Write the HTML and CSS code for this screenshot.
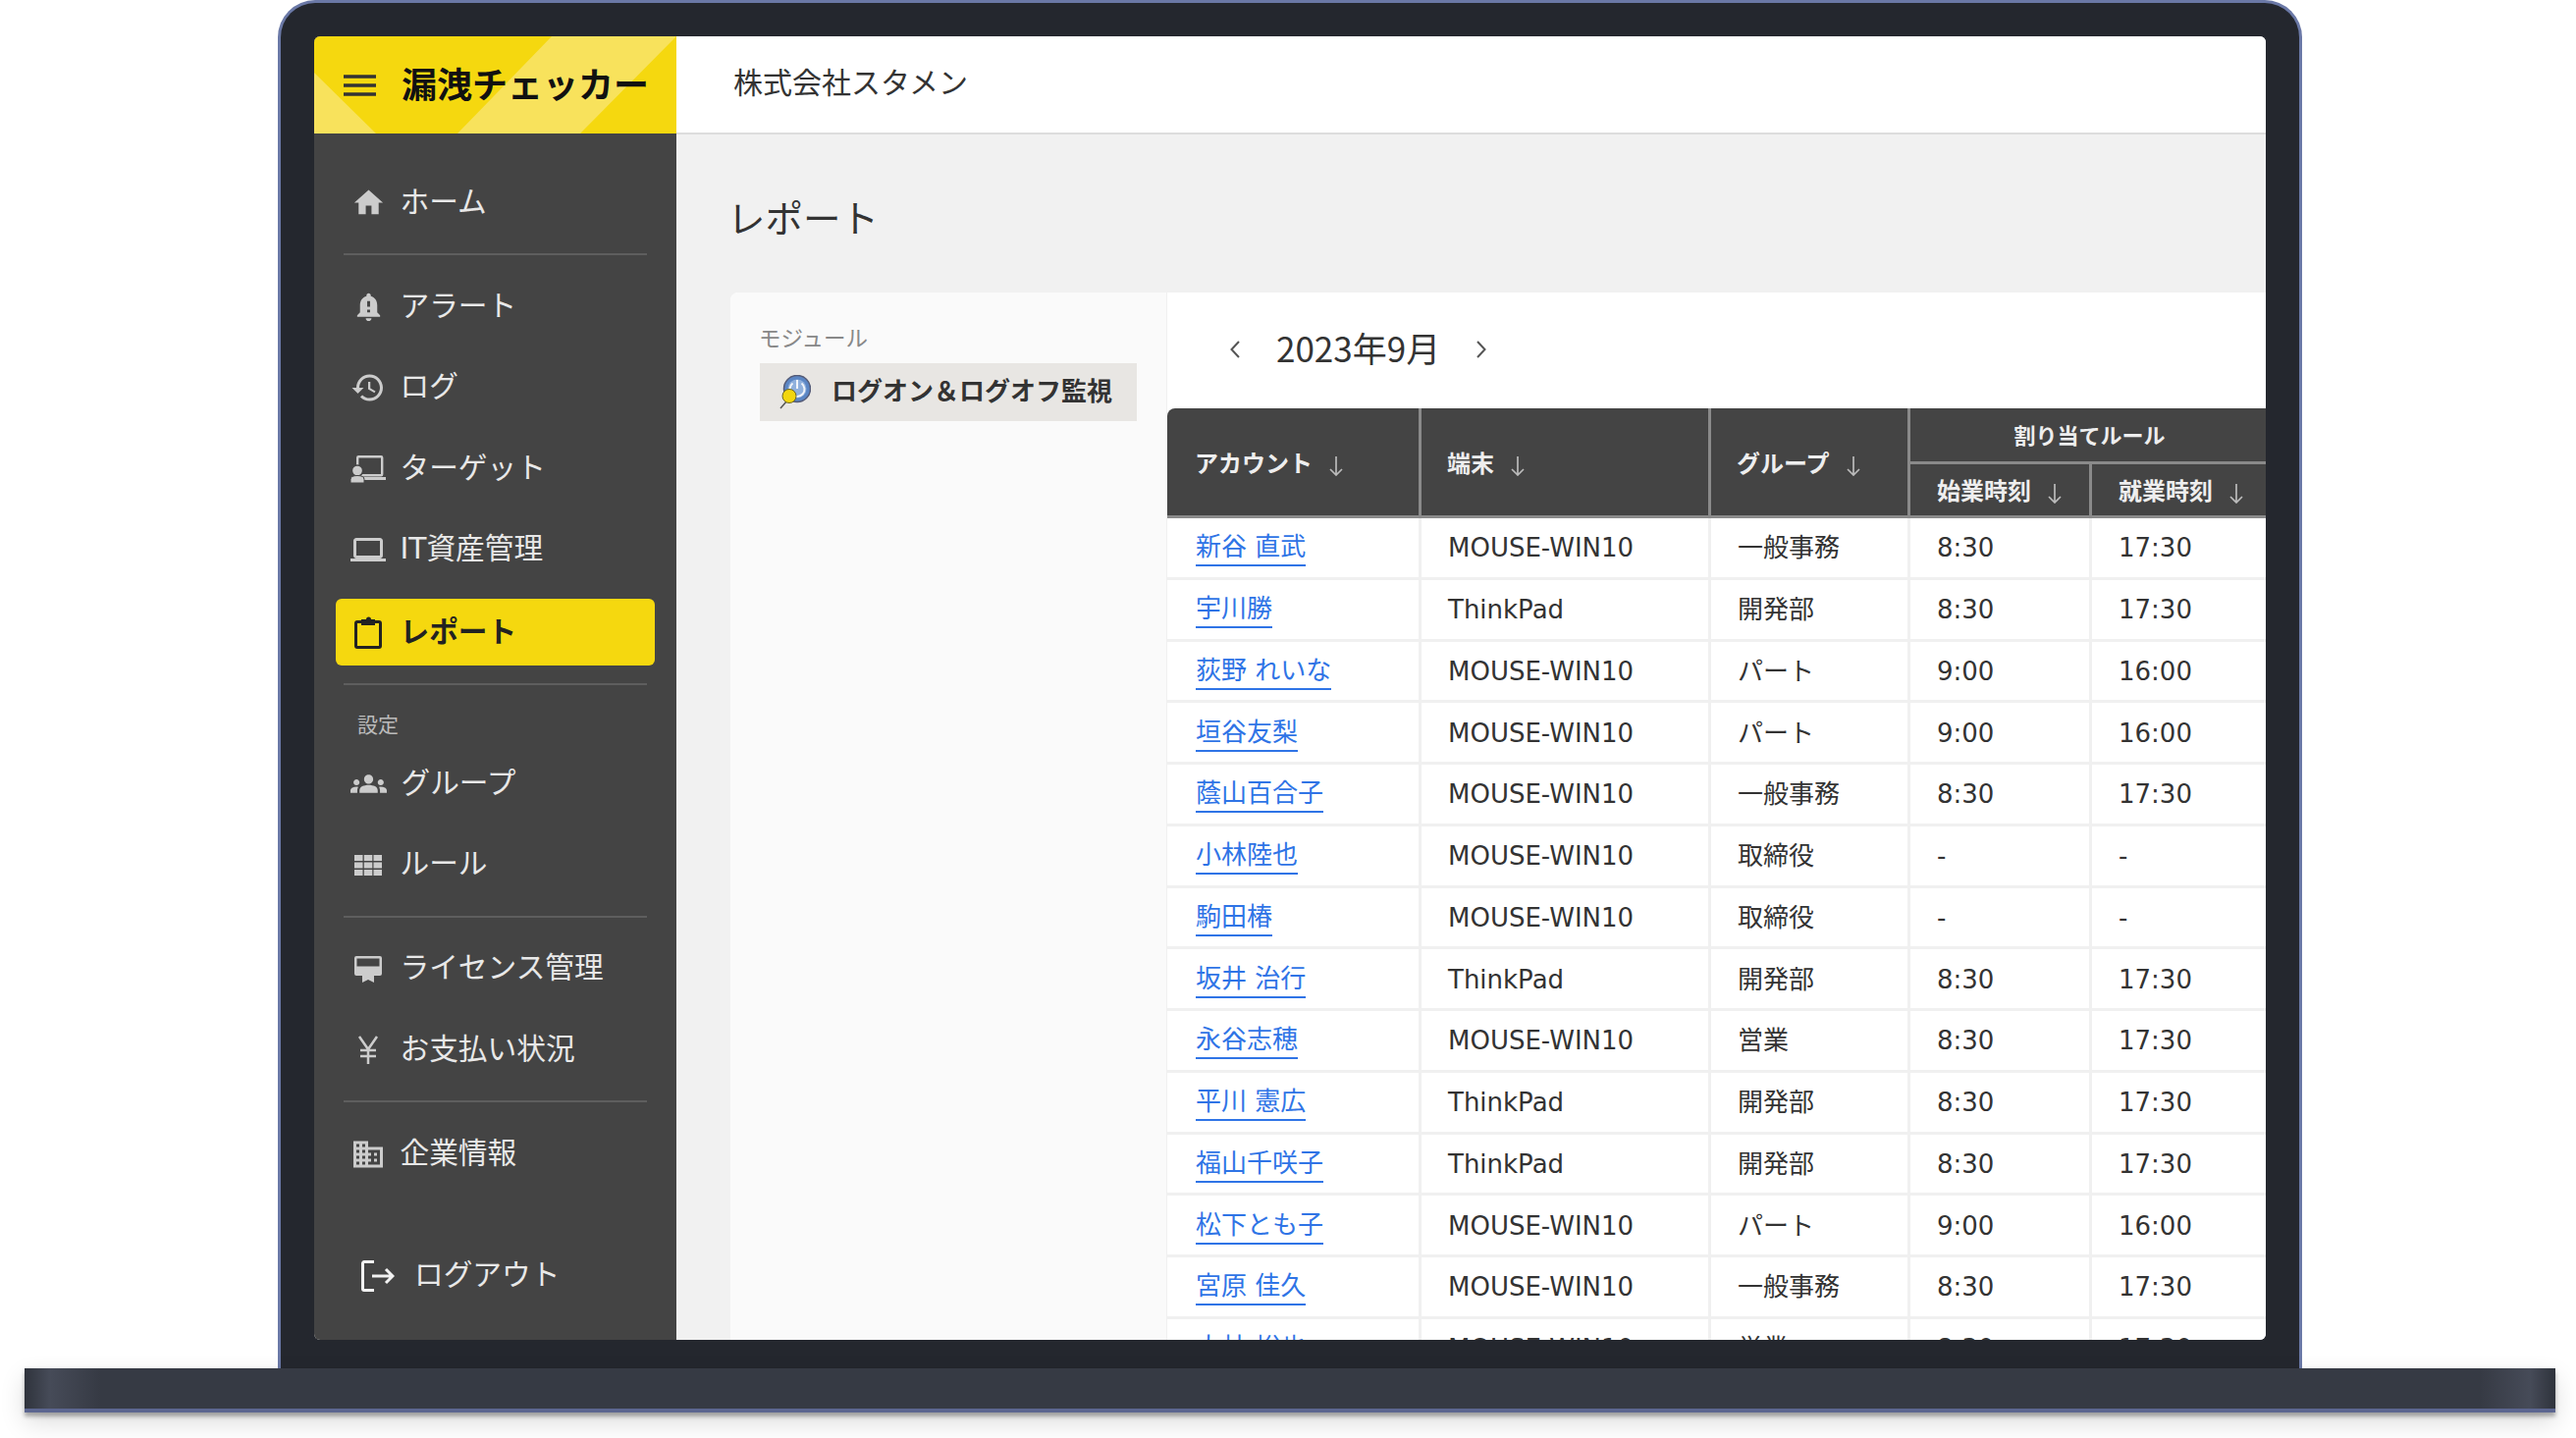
FILE: index.html
```html
<!DOCTYPE html>
<html lang="ja">
<head>
    <meta charset="UTF-8">
    <title>漏洩チェッカー | レポート</title>
    <link rel="stylesheet" href="styles.css">
</head>
<body>
    <svg class="sprite" width="0" height="0">
        <symbol id="sort" viewBox="0 0 14 20"><path d="M7 0v19M1 13l6 6 6-6" fill="none" stroke="currentColor" stroke-width="1.7"/></symbol>
    </svg>
    <div class="laptop">
        <div class="lid">
            <div class="screen">
                <aside class="sidebar">
                    <div class="logo">
                        <svg class="logo-bg" viewBox="0 0 369 99" preserveAspectRatio="none"><path d="M242 0H369L271 99H146zM0 37L63 99H0z" fill="#f8e25c"/></svg>
                        <svg class="menu-icon" width="33" height="22" viewBox="0 0 33 22"><path d="M0 2h33M0 11h33M0 20h33" stroke="#333" stroke-width="3.5"/></svg>
                        <span class="logo-text">漏洩チェッカー</span>
                    </div>
                    <nav class="side-nav">
                        <div class="nav-group">
                            <a class="nav-item"><span class="nav-icon"><svg width="35" height="35" viewBox="0 0 24 24"><path d="M10 20v-6h4v6h5v-8h3L12 3 2 12h3v8z"/></svg></span>ホーム</a>
                        </div>
                        <hr class="nav-divider">
                        <div class="nav-group">
                            <a class="nav-item"><span class="nav-icon"><svg width="35" height="35" viewBox="0 0 24 24"><path d="M18 16v-5c0-3.07-1.63-5.64-4.5-6.32V4c0-.83-.67-1.5-1.5-1.5s-1.5.67-1.5 1.5v.68C7.64 5.36 6 7.92 6 11v5l-2 2v1h16v-1l-2-2zm-5 0h-2v-2h2v2zm0-4h-2V8h2v4zm-1 10c1.1 0 2-.9 2-2h-4c0 1.1.9 2 2 2z"/></svg></span>アラート</a>
                            <a class="nav-item"><span class="nav-icon"><svg width="36" height="36" viewBox="0 0 24 24"><path d="M13 3c-4.97 0-9 4.03-9 9H1l3.89 3.89.07.14L9 12H6c0-3.87 3.13-7 7-7s7 3.13 7 7-3.13 7-7 7c-1.93 0-3.68-.79-4.94-2.06l-1.42 1.42C8.27 19.99 10.51 21 13 21c4.97 0 9-4.03 9-9s-4.03-9-9-9zm-1 5v5l4.28 2.54.72-1.21-3.5-2.08V8H12z"/></svg></span>ログ</a>
                            <a class="nav-item"><span class="nav-icon"><svg width="36" height="28" viewBox="0 0 36 28"><rect x="7.2" y="1.2" width="25" height="19" rx="1" fill="none" stroke="currentColor" stroke-width="2.4"/><path d="M14 22h22v3H14z"/><circle cx="7" cy="15.5" r="5.6" stroke="#444" stroke-width="1.5"/><path d="M0 28v-3.500q0-4 7-4t7 4V28z" stroke="#444" stroke-width="1"/></svg></span>ターゲット</a>
                            <a class="nav-item"><span class="nav-icon"><svg width="36" height="36" viewBox="0 0 24 24"><path d="M20 18c1.1 0 1.99-.9 1.99-2L22 6c0-1.100-.9-2-2-2H4c-1.100 0-2 .9-2 2v10c0 1.100.9 2 2 2H0v2h24v-2h-4zM4 6h16v10H4V6z"/></svg></span>IT資産管理</a>
                            <a class="nav-item active"><span class="nav-icon"><svg width="36" height="38" viewBox="0 0 36 38"><rect x="5.500" y="10.500" width="25" height="26" rx="1.500" fill="none" stroke="currentColor" stroke-width="3"/><path d="M11 8h5a2.500 2.500 0 0 1 5 0h4v6H11z"/></svg></span>レポート</a>
                        </div>
                        <hr class="nav-divider">
                        <div class="nav-label">設定</div>
                        <div class="nav-group">
                            <a class="nav-item"><span class="nav-icon"><svg width="37" height="37" viewBox="0 0 24 24"><path d="M4 13c1.100 0 2-.9 2-2 0-1.100-.9-2-2-2s-2 .9-2 2c0 1.100.9 2 2 2zm1.130 1.100C4.760 14.040 4.390 14 4 14c-.99 0-1.930.21-2.780.58C.48 14.900 0 15.620 0 16.430V18h4.500v-1.610c0-.83.23-1.610.63-2.290zM20 13c1.100 0 2-.9 2-2 0-1.100-.9-2-2-2s-2 .9-2 2c0 1.100.9 2 2 2zm4 3.430c0-.81-.48-1.530-1.220-1.850C21.930 14.210 20.990 14 20 14c-.39 0-.76.04-1.130.1.4.68.63 1.460.63 2.290V18H24v-1.570zM16.240 13.650c-1.170-.52-2.610-.9-4.240-.9-1.630 0-3.070.39-4.240.9C6.680 14.130 6 15.210 6 16.390V18h12v-1.610c0-1.180-.68-2.260-1.760-2.740zM12 12c1.660 0 3-1.340 3-3s-1.340-3-3-3-3 1.340-3 3 1.340 3 3 3z"/></svg></span>グループ</a>
                            <a class="nav-item"><span class="nav-icon"><svg width="28" height="21" viewBox="0 0 28 21"><path d="M0 0h8.500v6H0zM9.800 0h8.500v6H9.800zM19.500 0H28v6h-8.500zM0 7.500h8.500v6H0zM9.800 7.500h8.500v6H9.800zM19.500 7.500H28v6h-8.500zM0 15h8.500v6H0zM9.800 15h8.500v6H9.800zM19.500 15H28v6h-8.500z"/></svg></span>ルール</a>
                        </div>
                        <hr class="nav-divider">
                        <div class="nav-group">
                            <a class="nav-item"><span class="nav-icon"><svg width="28" height="27" viewBox="0 0 28 27"><path d="M2 0h24a2 2 0 0 1 2 2v16a2 2 0 0 1-2 2H2a2 2 0 0 1-2-2V2a2 2 0 0 1 2-2zm.5 2.500v8h23v-8zM8 20h12v7l-6-3-6 3z" fill-rule="evenodd"/></svg></span>ライセンス管理</a>
                            <a class="nav-item"><span class="nav-icon"><svg width="22" height="29" viewBox="0 0 22 29"><path d="M2 1l9 13 9-13M3 15h16M3 21h16M11 14v15" fill="none" stroke="currentColor" stroke-width="2.500"/></svg></span>お支払い状況</a>
                        </div>
                        <hr class="nav-divider">
                        <div class="nav-group">
                            <a class="nav-item"><span class="nav-icon"><svg width="36" height="36" viewBox="0 0 24 24"><path d="M12 7V3H2v18h20V7H12zM6 19H4v-2h2v2zm0-4H4v-2h2v2zm0-4H4V9h2v2zm0-4H4V5h2v2zm4 12H8v-2h2v2zm0-4H8v-2h2v2zm0-4H8V9h2v2zm0-4H8V5h2v2zm10 12h-8v-2h2v-2h-2v-2h2v-2h-2V9h8v10zm-2-8h-2v2h2v-2zm0 4h-2v2h2v-2z"/></svg></span>企業情報</a>
                        </div>
                        <a class="nav-item logout"><span class="nav-icon"><svg width="34" height="32" viewBox="0 0 34 32"><path d="M13 1.500H3a1.500 1.500 0 0 0-1.500 1.500v26A1.500 1.500 0 0 0 3 30.500h10M11 16h21M25 9l7 7-7 7" fill="none" stroke="#f2f2f2" stroke-width="3"/></svg></span>ログアウト</a>
                    </nav>
                </aside>
                <div class="main">
                    <header class="topbar">株式会社スタメン</header>
                    <div class="content">
                        <h1 class="page-title">レポート</h1>
                        <div class="card">
                            <div class="module-panel">
                                <div class="module-label">モジュール</div>
                                <div class="module-item">
                                    <svg width="32" height="35" viewBox="0 0 32 35">
                                        <circle cx="18" cy="14" r="13.500" fill="#5b86c4" stroke="#555c78" stroke-width="1.500"/>
                                        <circle cx="18" cy="14" r="9.500" fill="#8fb0dc"/>
                                        <path d="M13.500 8.500a7.500 7.500 0 1 0 9 0M18 5v9" fill="none" stroke="#f0f4fa" stroke-width="2"/>
                                        <path d="M8 26L1 34" stroke="#555" stroke-width="1.500"/>
                                        <circle cx="10" cy="21.500" r="7" fill="#f2d60e" stroke="#6b6420" stroke-width="1"/>
                                    </svg>
                                    <span>ログオン＆ログオフ監視</span>
                                </div>
                            </div>
                            <div class="report-panel">
                                <div class="month-nav">
                                    <svg width="10" height="18" viewBox="0 0 10 18"><path d="M9 1L1.500 9 9 17" fill="none" stroke="#555" stroke-width="2"/></svg>
                                    <span class="month">2023年9月</span>
                                    <svg width="10" height="18" viewBox="0 0 10 18"><path d="M1 1l7.500 8L1 17" fill="none" stroke="#555" stroke-width="2"/></svg>
                                </div>
                                <table class="report-table">
                                    <colgroup><col class="col-account"><col class="col-device"><col class="col-group"><col class="col-start"><col class="col-end"></colgroup>
                                    <thead>
                                        <tr class="head-top">
                                            <th rowspan="2">アカウント<svg class="sort" width="14" height="20"><use href="#sort"/></svg></th>
                                            <th rowspan="2">端末<svg class="sort" width="14" height="20"><use href="#sort"/></svg></th>
                                            <th rowspan="2">グループ<svg class="sort" width="14" height="20"><use href="#sort"/></svg></th>
                                            <th colspan="2" class="head-rule">割り当てルール</th>
                                        </tr>
                                        <tr class="head-sub">
                                            <th>始業時刻<svg class="sort" width="14" height="20"><use href="#sort"/></svg></th>
                                            <th>就業時刻<svg class="sort" width="14" height="20"><use href="#sort"/></svg></th>
                                        </tr>
                                    </thead>
                                    <tbody>
                                        <tr><td><a>新谷 直武</a></td><td>MOUSE-WIN10</td><td>一般事務</td><td>8:30</td><td>17:30</td></tr>
                                        <tr><td><a>宇川勝</a></td><td>ThinkPad</td><td>開発部</td><td>8:30</td><td>17:30</td></tr>
                                        <tr><td><a>荻野 れいな</a></td><td>MOUSE-WIN10</td><td>パート</td><td>9:00</td><td>16:00</td></tr>
                                        <tr><td><a>垣谷友梨</a></td><td>MOUSE-WIN10</td><td>パート</td><td>9:00</td><td>16:00</td></tr>
                                        <tr><td><a>蔭山百合子</a></td><td>MOUSE-WIN10</td><td>一般事務</td><td>8:30</td><td>17:30</td></tr>
                                        <tr><td><a>小林陸也</a></td><td>MOUSE-WIN10</td><td>取締役</td><td>-</td><td>-</td></tr>
                                        <tr><td><a>駒田椿</a></td><td>MOUSE-WIN10</td><td>取締役</td><td>-</td><td>-</td></tr>
                                        <tr><td><a>坂井 治行</a></td><td>ThinkPad</td><td>開発部</td><td>8:30</td><td>17:30</td></tr>
                                        <tr><td><a>永谷志穂</a></td><td>MOUSE-WIN10</td><td>営業</td><td>8:30</td><td>17:30</td></tr>
                                        <tr><td><a>平川 憲広</a></td><td>ThinkPad</td><td>開発部</td><td>8:30</td><td>17:30</td></tr>
                                        <tr><td><a>福山千咲子</a></td><td>ThinkPad</td><td>開発部</td><td>8:30</td><td>17:30</td></tr>
                                        <tr><td><a>松下とも子</a></td><td>MOUSE-WIN10</td><td>パート</td><td>9:00</td><td>16:00</td></tr>
                                        <tr><td><a>宮原 佳久</a></td><td>MOUSE-WIN10</td><td>一般事務</td><td>8:30</td><td>17:30</td></tr>
                                        <tr><td><a>大林 裕也</a></td><td>MOUSE-WIN10</td><td>営業</td><td>8:30</td><td>17:30</td></tr>
                                    </tbody>
                                </table>
                            </div>
                        </div>
                    </div>
                </div>
            </div>
        </div>
        <div class="base"></div>
    </div>
</body>
</html>
```

FILE: styles.css
```css
* {
    box-sizing: border-box;
}
body {
    margin: 0;
    height: 1465px;
    overflow: hidden;
    background-color: #fff;
    color: #333;
    font-family: "DejaVu Sans", "Noto Sans CJK JP", sans-serif;
}
.sprite {
    position: absolute;
}
.laptop {
    display: flex;
    flex-direction: column;
    align-items: center;
    width: 2578px;
    margin-left: 25px;
}
.lid {
    width: 2062px;
    height: 1394px;
    padding: 34px 34px 29px;
    background-color: #24272e;
    border: 3px solid #6a78a6;
    border-bottom: none;
    border-radius: 38px 38px 0 0;
}
.base {
    width: 100%;
    height: 45px;
    background: linear-gradient(90deg, #2f333c 0, #464b58 1%, #363a44 3%, #363a44 97%, #464b58 99%, #2f333c 100%);
    border-bottom: 4px solid #5c6690;
    box-shadow: 0 4px 4px rgba(0, 0, 0, 0.3), 0 10px 26px rgba(0, 0, 0, 0.14);
}
.screen {
    display: flex;
    height: 1328px;
    overflow: hidden;
    border-radius: 6px;
    background-color: #f1f1f1;
}

/* sidebar */
.sidebar {
    flex: 0 0 369px;
    background-color: #444;
    color: #e8e8e8;
}
.logo {
    position: relative;
    display: flex;
    align-items: center;
    gap: 26px;
    height: 99px;
    padding: 0 0 5px 30px;
    background-color: #f5d80f;
}
.logo-bg {
    position: absolute;
    left: 0;
    top: 0;
    width: 100%;
    height: 100%;
}
.menu-icon, .logo-text {
    position: relative;
}
.menu-icon {
    margin-top: 5px;
}
.logo-text {
    color: #111;
    font-size: 36px;
    font-weight: 700;
    white-space: nowrap;
}
.side-nav {
    padding: 36px 22px 0;
}
.nav-group {
    display: flex;
    flex-direction: column;
    gap: 14.5px;
}
.nav-item {
    display: flex;
    align-items: center;
    gap: 14.5px;
    height: 68px;
    padding: 0 0 1px 15px;
    border-radius: 6px;
    font-size: 29.7px;
    line-height: 40px;
    white-space: nowrap;
}
.nav-icon {
    display: flex;
    align-items: center;
    justify-content: center;
    flex: 0 0 36px;
    margin-top: 2px;
    color: #ccc;
    fill: currentColor;
}
.nav-icon svg {
    display: block;
    flex: none;
}
.nav-item.active {
    margin-top: 2px;
    background-color: #f5d80f;
    color: #222;
    font-weight: 700;
}
.nav-item.active .nav-icon {
    margin-top: -3px;
    color: #222;
}
.nav-item.logout {
    gap: 20px;
    margin-top: 56.5px;
    padding-left: 26px;
}
.nav-item.logout .nav-icon {
    flex-basis: 34px;
}
.nav-divider {
    height: 2px;
    margin: 18px 8px;
    border: none;
    background-color: #5e5e5e;
}
.nav-label {
    height: 44px;
    margin-bottom: 4px;
    padding-left: 22px;
    color: #bbb;
    font-size: 21px;
    line-height: 46px;
}

/* main area */
.main {
    display: flex;
    flex-direction: column;
    flex: 1;
    min-width: 0;
}
.topbar {
    flex: 0 0 100px;
    padding: 27px 0 0 58px;
    background-color: #fff;
    border-bottom: 2px solid #ddd;
    font-size: 30px;
    line-height: 42px;
}
.content {
    display: flex;
    flex-direction: column;
    flex: 1;
    min-height: 0;
    padding: 62px 0 0 55px;
}
.page-title {
    margin: 0 0 49px -3px;
    font-size: 38.5px;
    font-weight: 400;
    line-height: 50px;
}
.card {
    display: flex;
    flex: 1;
    min-height: 0;
    overflow: hidden;
    border-radius: 8px 0 0 0;
    background-color: #fff;
}
.module-panel {
    flex: 0 0 441px;
    padding: 31.5px 30px 0;
    background-color: #fafafa;
    border-right: 1px solid #f0f0f0;
}
.module-label {
    margin: 0 0 10.5px -1px;
    color: #888;
    font-size: 22.5px;
    line-height: 30px;
}
.module-item {
    display: flex;
    align-items: center;
    gap: 21px;
    width: 384px;
    height: 59px;
    padding: 0 0 6px 20px;
    background-color: #e8e6e3;
    font-size: 26px;
    font-weight: 700;
    white-space: nowrap;
}
.module-item svg {
    margin-top: 6px;
}
.report-panel {
    flex: 1;
    min-width: 0;
}
.month-nav {
    display: flex;
    align-items: center;
    gap: 37px;
    height: 115px;
    margin-bottom: 3px;
    padding-left: 64px;
}
.month {
    margin-bottom: 4px;
    font-family: "Noto Sans CJK JP", sans-serif;
    font-size: 35px;
    white-space: nowrap;
}

/* table */
.report-table {
    width: 1122px;
    table-layout: fixed;
    border-collapse: separate;
    border-spacing: 0;
    font-size: 26px;
}
.col-account { width: 259px; }
.col-device { width: 295px; }
.col-group { width: 203px; }
.col-start { width: 185px; }
.col-end { width: 180px; }
.report-table th {
    padding: 0 0 0 26px;
    background-color: #444;
    border-right: 3px solid #8a8a8a;
    border-bottom: 3px solid #8a8a8a;
    color: #eee;
    font-size: 24px;
    font-weight: 700;
    text-align: left;
    white-space: nowrap;
}
.report-table th:first-child {
    padding-left: 28px;
}
.report-table .head-top th {
    height: 57px;
}
.report-table .head-top th:first-child {
    border-top-left-radius: 8px;
}
.report-table .head-sub th {
    height: 55px;
    padding: 0 0 2px 27px;
}
.report-table .head-sub th:last-child,
.report-table .head-rule {
    border-right: none;
}
.report-table .head-rule {
    padding: 0 0 2px;
    font-size: 22px;
    text-align: center;
}
.sort {
    margin-left: 17px;
    color: #bbb;
    vertical-align: -4px;
}
.report-table td {
    height: 62.75px;
    padding: 1px 0 0 27px;
    border-right: 3px solid #f0f0f0;
    border-bottom: 3px solid #f0f0f0;
    line-height: 36px;
    white-space: nowrap;
}
.report-table td:first-child {
    padding-left: 29px;
}
.report-table td:last-child {
    border-right: none;
}
.report-table a {
    display: inline-block;
    color: #2f74e6;
    line-height: 36px;
    border-bottom: 2px solid #2f74e6;
}
```
